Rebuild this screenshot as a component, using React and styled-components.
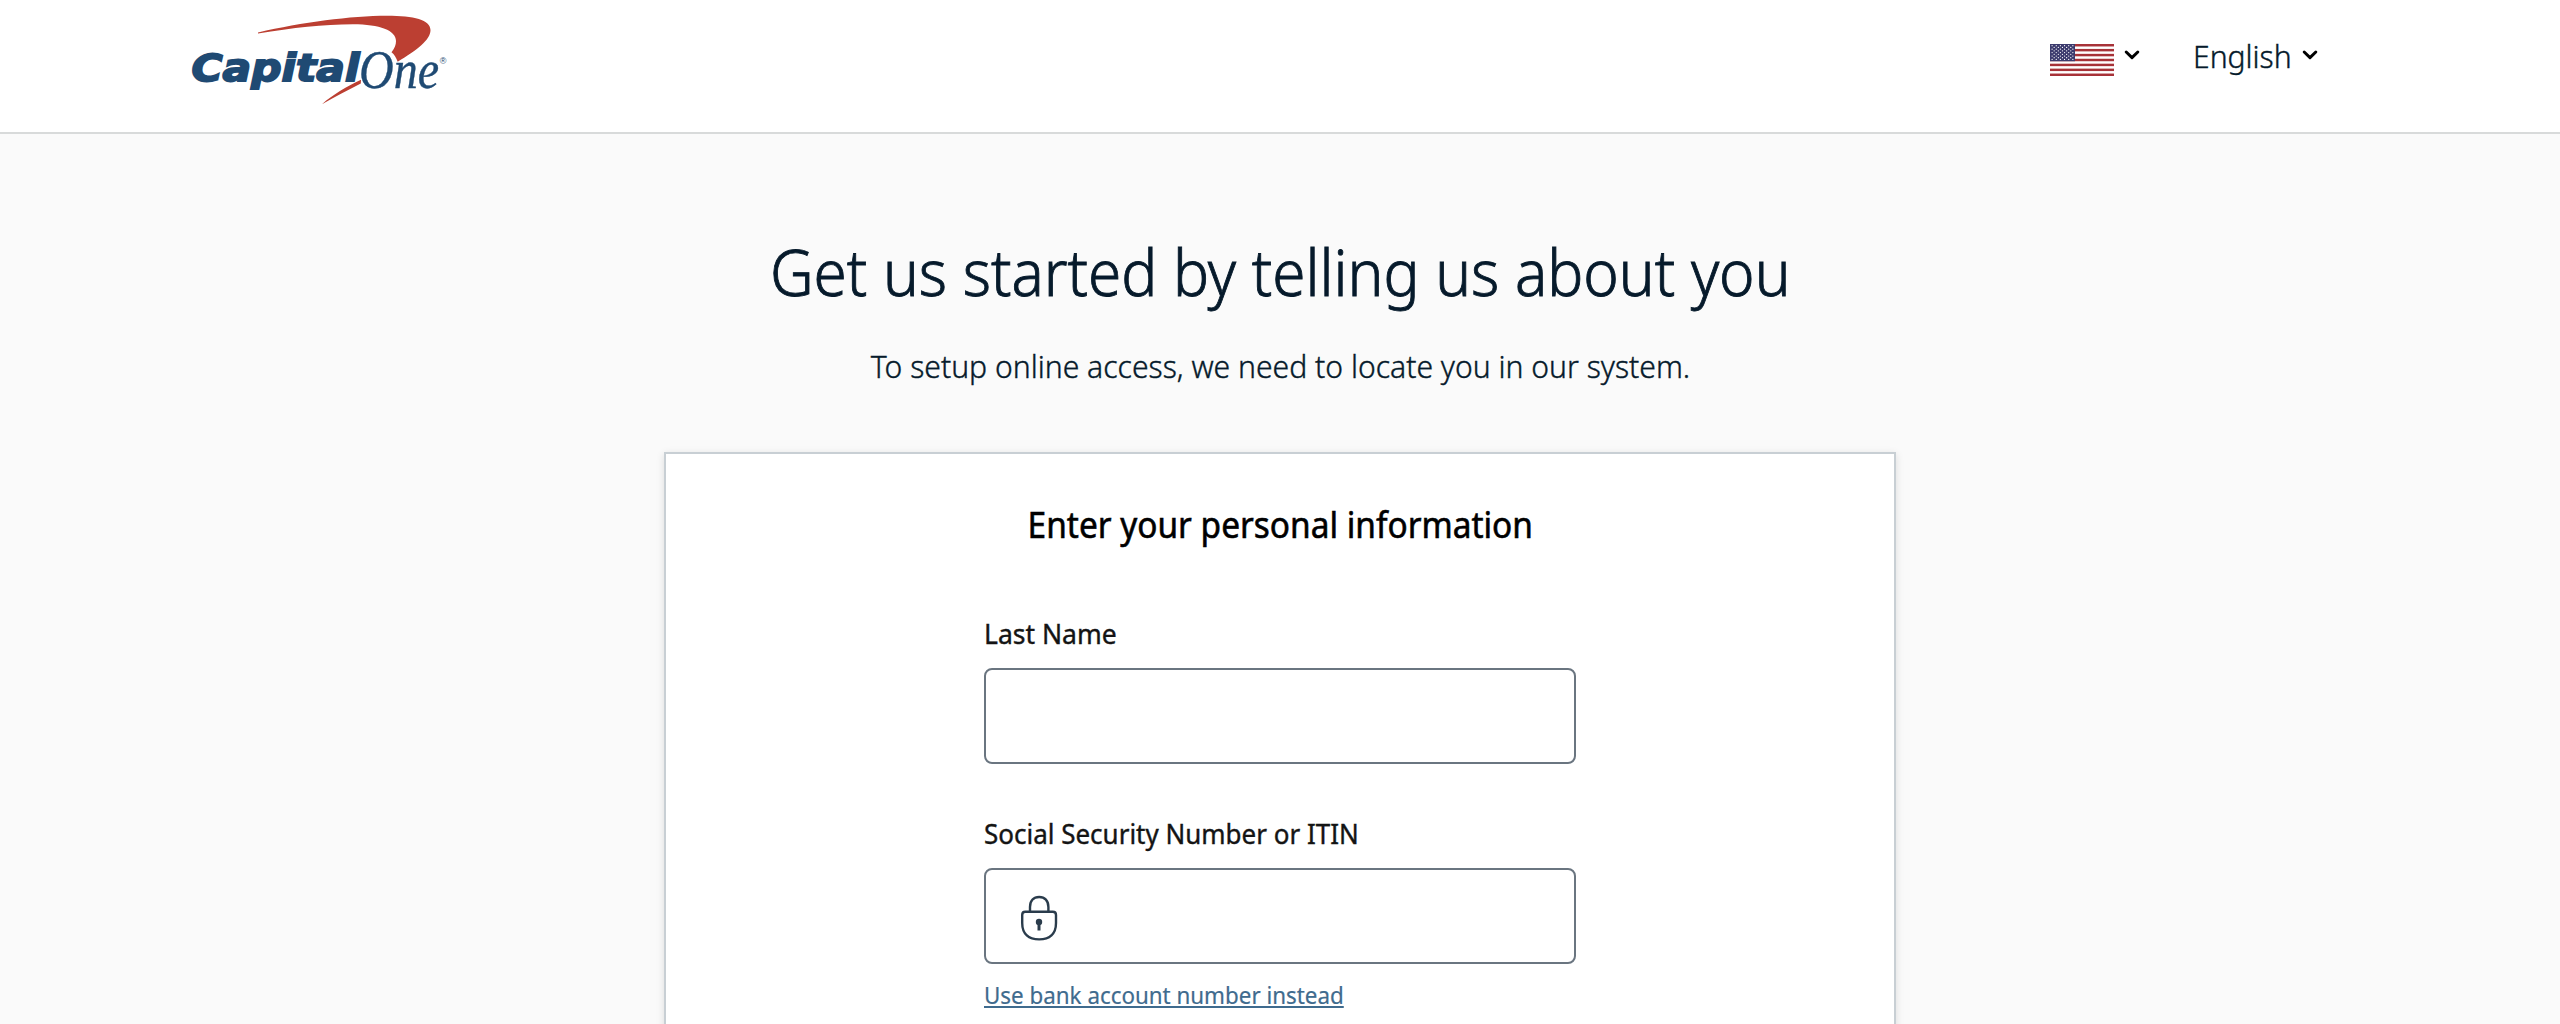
import React from "react";
import styled, { createGlobalStyle } from "styled-components";

const GlobalStyle = createGlobalStyle`
  *, *::before, *::after { box-sizing: border-box; }
  body {
    margin: 0;
    background: #fafafa;
    color: #061a2b;
    font-family: "Noto Sans", "Open Sans", sans-serif;
  }
  h1, h2, p { margin: 0; }
`;

const Page = styled.div`
  height: 1024px;
  overflow: hidden;
  display: flex;
  flex-direction: column;
`;

const Header = styled.header`
  flex: none;
  height: 134px;
  padding: 0 242px 0 180px;
  background: #fff;
  border-bottom: 2px solid #d8dada;
  display: flex;
  justify-content: space-between;
`;

const LogoImage = styled.svg`
  display: block;
  width: 280px;
  height: 120px;
`;

const Menus = styled.nav`
  display: flex;
  align-items: flex-start;
  gap: 53px;
`;

const MenuButton = styled.button`
  height: 112px;
  padding: 0;
  border: 0;
  background: none;
  color: inherit;
  font: inherit;
  display: flex;
  align-items: center;
  gap: ${(p) => p.$gap}px;
`;

const FlagImage = styled.svg`
  width: 64px;
  height: 32px;
  margin-top: 8px;
`;

const ChevronIcon = styled.svg`
  width: 16px;
  height: 12px;
  margin-top: -2px;
`;

const LanguageName = styled.span`
  width: 97px;
  font-size: 32px;
  font-weight: 300;
  line-height: 48px;
  white-space: nowrap;
  -webkit-text-stroke: 0.4px currentColor;
  transform: scaleX(0.94);
  transform-origin: left center;
`;

const Main = styled.main`
  flex: none;
  padding-top: 98px;
  display: flex;
  flex-direction: column;
  align-items: center;
`;

const Title = styled.h1`
  font-size: 64px;
  font-weight: 300;
  line-height: 80px;
  white-space: nowrap;
  -webkit-text-stroke: 0.9px currentColor;
  transform: scaleX(0.941);
`;

const Subtitle = styled.p`
  margin-top: 30px;
  font-size: 32px;
  font-weight: 300;
  line-height: 48px;
  white-space: nowrap;
  -webkit-text-stroke: 0.4px currentColor;
  transform: scaleX(0.941);
`;

const Card = styled.section`
  width: 1232px;
  height: 640px;
  margin-top: 62px;
  padding-top: 47px;
  background: #fff;
  border: 2px solid #c8cfd4;
  box-shadow: 0 2px 8px rgba(0, 0, 0, 0.12);
  display: flex;
  flex-direction: column;
  align-items: center;
`;

const CardTitle = styled.h2`
  color: #000;
  font-size: 36px;
  font-weight: 400;
  line-height: 48px;
  white-space: nowrap;
  -webkit-text-stroke: 0.6px currentColor;
  transform: scaleX(0.928);
`;

const Form = styled.form`
  width: 592px;
  margin-top: 66px;
  display: flex;
  flex-direction: column;
  align-items: flex-start;
  gap: 51px;
`;

const Field = styled.div`
  width: 100%;
  display: flex;
  flex-direction: column;
  align-items: flex-start;
`;

const Label = styled.label`
  color: #141414;
  font-size: 28px;
  font-weight: 400;
  line-height: 36px;
  white-space: nowrap;
  -webkit-text-stroke: 0.4px currentColor;
  transform: scaleX(${(p) => p.$stretch});
  transform-origin: left center;
`;

const InputBox = styled.div`
  width: 100%;
  height: 96px;
  margin-top: 17px;
  padding-left: 32px;
  border: 2px solid #6a7580;
  border-radius: 8px;
  background: #fff;
  display: flex;
  align-items: center;
`;

const LockIcon = styled.svg`
  flex: none;
  width: 42px;
  height: 48px;
  margin-top: 4px;
`;

const TextInput = styled.input`
  flex: 1;
  min-width: 0;
  border: 0;
  outline: 0;
  background: none;
  font: inherit;
  font-size: 32px;
`;

const SwitchLink = styled.a`
  margin-top: 15px;
  color: #3f6b8e;
  font-size: 24px;
  font-weight: 400;
  line-height: 32px;
  white-space: nowrap;
  text-decoration: underline;
  text-decoration-thickness: 2px;
  text-decoration-skip-ink: none;
  text-underline-offset: 2px;
  -webkit-text-stroke: 0.2px currentColor;
  transform: scaleX(0.932);
  transform-origin: left center;
`;

function Logo() {
  return (
    <LogoImage viewBox="0 0 280 120" role="img" aria-label="Capital One">
      <path
        fill="#bc3f32"
        d="M78 32.4 C122 22.5 171 15.8 207 15.8 C234 15.8 250.5 20 250.5 30 C250.5 40 237 50 217.7 61.7 C216 57.5 214.4 54.5 211.5 52.3 C214.8 48.3 216 44.5 216 41 C216 30.5 200 24.3 173 24.3 C143 24.3 113 28 78 33.4 Z"
      />
      <path fill="#bc3f32" d="M142 104.2 C153 94.5 167 86.5 181 79.8 L180.8 83.6 C168 90 155 97 142 104.2 Z" />
      <text
        x="11.5"
        y="81"
        fill="#1f4a73"
        stroke="#1f4a73"
        strokeWidth="1.8"
        fontFamily="'DejaVu Sans', sans-serif"
        fontWeight="700"
        fontStyle="italic"
        fontSize="37"
        textLength="168"
        lengthAdjust="spacingAndGlyphs"
      >
        Capital
      </text>
      <text
        x="179"
        y="87.8"
        fill="#1f4a73"
        stroke="#1f4a73"
        strokeWidth="0.4"
        fontFamily="'Liberation Serif', serif"
        fontStyle="italic"
        fontSize="54"
        textLength="80"
        lengthAdjust="spacingAndGlyphs"
      >
        One
      </text>
      <text x="259.8" y="63.6" fill="#1f4a73" fontFamily="'Liberation Sans', sans-serif" fontSize="9">
        ®
      </text>
    </LogoImage>
  );
}

const STRIPE = 32 / 13;
const STAR_ROWS = [0, 1, 2, 3, 4, 5, 6, 7, 8];

function Flag() {
  return (
    <FlagImage viewBox="0 0 64 32" aria-label="United States">
      <rect width="64" height="32" fill="#fff" />
      {[0, 2, 4, 6, 8, 10, 12].map((i) => (
        <rect key={i} y={i * STRIPE} width="64" height={STRIPE} fill="#a73238" />
      ))}
      <rect width="25" height={STRIPE * 7} fill="#3c3b6e" />
      {STAR_ROWS.map((row) =>
        Array.from({ length: row % 2 ? 5 : 6 }, (_, col) => (
          <circle
            key={`${row}-${col}`}
            cx={2.1 + col * 4.15 + (row % 2 ? 2.07 : 0)}
            cy={1.7 + row * 1.72}
            r="0.62"
            fill="#fff"
          />
        ))
      )}
    </FlagImage>
  );
}

function Chevron() {
  return (
    <ChevronIcon viewBox="0 0 16 12" aria-hidden="true">
      <path d="M2.2 3 L8 8.6 L13.8 3" fill="none" stroke="#000" strokeWidth="3" strokeLinecap="round" strokeLinejoin="round" />
    </ChevronIcon>
  );
}

function Lock() {
  return (
    <LockIcon viewBox="0 0 42 48" aria-hidden="true">
      <g fill="none" stroke="#2a3c4c" strokeWidth="2.4">
        <path d="M12 17.5 V13 C12 6.8 15.6 3 21.2 3 C26.8 3 30.4 6.8 30.4 13 V17.5" />
        <path d="M7.2 17.8 H34.8 Q38 17.8 38 21 V29 C38 40 31.5 45.4 21.2 45.4 C10.8 45.4 4.2 40 4.2 29 V21 Q4.2 17.8 7.2 17.8 Z" />
      </g>
      <circle cx="21" cy="28" r="3.2" fill="#2a3c4c" />
      <rect x="19.5" y="28" width="3" height="8.5" fill="#2a3c4c" />
    </LockIcon>
  );
}

export default function App() {
  return (
    <Page>
      <GlobalStyle />
      <Header>
        <Logo />
        <Menus>
          <MenuButton $gap={10} type="button" aria-label="Country">
            <Flag />
            <Chevron />
          </MenuButton>
          <MenuButton $gap={12} type="button">
            <LanguageName>English</LanguageName>
            <Chevron />
          </MenuButton>
        </Menus>
      </Header>
      <Main>
        <Title>Get us started by telling us about you</Title>
        <Subtitle>To setup online access, we need to locate you in our system.</Subtitle>
        <Card>
          <CardTitle>Enter your personal information</CardTitle>
          <Form>
            <Field>
              <Label htmlFor="last-name" $stretch={0.947}>Last Name</Label>
              <InputBox>
                <TextInput id="last-name" />
              </InputBox>
            </Field>
            <Field>
              <Label htmlFor="ssn" $stretch={0.928}>Social Security Number or ITIN</Label>
              <InputBox>
                <Lock />
                <TextInput id="ssn" />
              </InputBox>
              <SwitchLink href="#">Use bank account number instead</SwitchLink>
            </Field>
          </Form>
        </Card>
      </Main>
    </Page>
  );
}
